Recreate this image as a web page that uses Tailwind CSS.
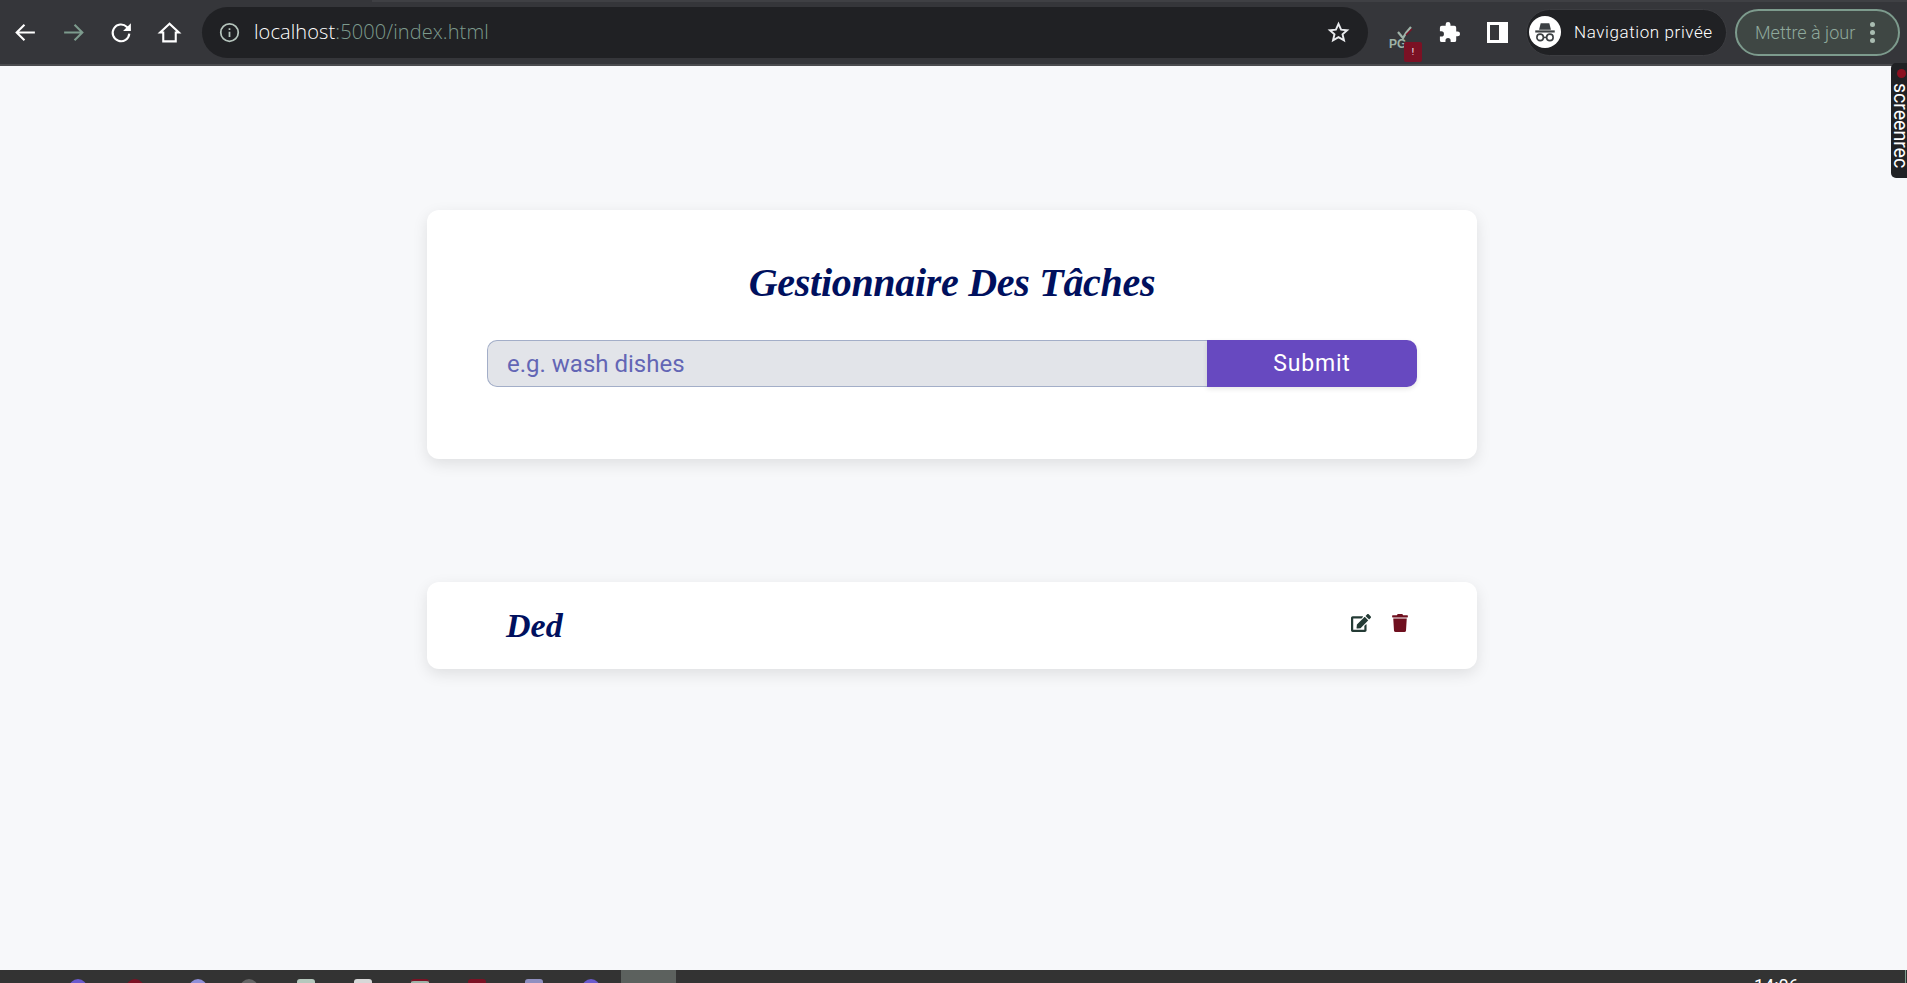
<!DOCTYPE html>
<html lang="fr">
<head>
  <meta charset="UTF-8" />
  <meta name="viewport" content="width=device-width, initial-scale=1.0"/>
  <title>Gestionnaire Des Tâches</title>
  <script src="https://cdn.jsdelivr.net/npm/@tailwindcss/browser@4"></script>
</head>
<body class="bg-[#f7f8fa] h-[983px] w-[1907px] overflow-hidden relative flex flex-col font-['Roboto',sans-serif]">

  <!-- Browser toolbar -->
  <header class="h-[66px] shrink-0 bg-[#35363a] border-b-2 border-[#4b4c4f] flex items-center relative">
    <div class="absolute top-0 left-[372px] right-0 h-[2px] bg-[#3f4044]"></div>

    <div class="flex items-center w-[202px] pl-[13px] gap-[23px]">
      <svg class="w-[25px] h-[25px]" viewBox="0 0 24 24" fill="none" stroke="#fff" stroke-width="2"><path d="M21 12H4M11 4.500 3.500 12l7.500 7.500"/></svg>
      <svg class="w-[25px] h-[25px]" viewBox="0 0 24 24" fill="none" stroke="#7d9b8d" stroke-width="2"><path d="M3 12h17M13 4.500l7.500 7.500-7.500 7.500"/></svg>
      <svg class="w-[25px] h-[25px]" viewBox="0 0 24 24" fill="none" stroke="#fff" stroke-width="2"><path d="M19.500 13a8 8 0 1 1-2.300-6.300L20 9.500"/><path d="M21 3v7.500h-7.500z" fill="#fff" stroke="none"/></svg>
      <svg class="w-[25px] h-[25px]" viewBox="0 0 24 24" fill="none" stroke="#fff" stroke-width="2"><path d="M12 3.500 3 12h3v8.500h12V12h3z"/></svg>
    </div>

    <div class="w-[1166px] h-[51px] rounded-full bg-[#202124] flex items-center pl-[17px] pr-[18px]">
      <svg class="w-[21px] h-[21px] shrink-0" viewBox="0 0 24 24" fill="none" stroke="#b5c4bc" stroke-width="2"><circle cx="12" cy="12" r="10"/><path d="M12 11v6M12 7v2"/></svg>
      <span class="ml-[14px] text-[20px] tracking-[0.1px] font-light text-white font-['Open_Sans',sans-serif]">localhost<span class="text-[#7d9b8d]">:5000/index.html</span></span>
      <svg class="w-[23px] h-[23px] ml-auto" viewBox="0 0 24 24" fill="none" stroke="#e8eaed" stroke-width="2"><path d="m12 3 2.700 6 6.300.6-4.800 4.200 1.500 6.400L12 16.800 6.300 20.200l1.500-6.400L3 9.600 9.300 9z"/></svg>
    </div>

    <div class="flex items-center">
      <!-- PG extension -->
      <div class="relative w-[33px] h-[36px] ml-[21px] mt-[24px]">
        <svg class="absolute left-[8px] top-0 w-[17px] h-[15px]" viewBox="0 0 17 15" fill="none"><path d="M1 6l5 6 3-5 5-6" stroke="#9fb3a8" stroke-width="2.200"/><path d="M9 9l6-6" stroke="#7b1124" stroke-width="1.500"/></svg>
        <span class="absolute left-0 top-[12px] text-[12px] leading-[13px] font-bold text-[#9fb3a8] font-['Liberation_Sans',sans-serif]">PG</span>
        <div class="absolute right-0 bottom-0 w-[18px] h-[20px] rounded-[2px] bg-[#7b1124] text-white text-[9px] leading-[20px] text-center">!</div>
      </div>

      <svg class="w-[23px] h-[23px] ml-[16px]" viewBox="0 0 24 24" fill="#fff"><path d="M20.500 11H19V7a2 2 0 0 0-2-2h-4V3.500a2.500 2.500 0 0 0-5 0V5H4a2 2 0 0 0-2 2v3.800h1.500a2.700 2.700 0 0 1 0 5.400H2V20a2 2 0 0 0 2 2h3.800v-1.500a2.700 2.700 0 0 1 5.400 0V22H17a2 2 0 0 0 2-2v-4h1.500a2.500 2.500 0 0 0 0-5z"/></svg>

      <div class="w-[21px] h-[21px] ml-[26px] border-[3px] border-white bg-[#35363a] flex justify-end">
        <div class="w-[6px] h-full bg-white"></div>
      </div>

      <!-- Incognito pill -->
      <div class="w-[201px] h-[47px] ml-[18px] rounded-full bg-[#202124] border border-[#3c3d41] flex items-center pl-[2px]">
        <div class="w-[32px] h-[32px] rounded-full bg-white flex items-center justify-center">
          <svg class="w-[26px] h-[26px]" viewBox="0 0 24 24" fill="none" stroke="#3c4043" stroke-width="1.500"><path d="M8 4h8l1.500 6h-11z" fill="#3c4043" stroke="none"/><path d="M3 11.500h18" stroke-width="2"/><circle cx="7.500" cy="17" r="3"/><circle cx="16.500" cy="17" r="3"/><path d="M10.500 17h3"/></svg>
        </div>
        <span class="ml-[13px] pt-[1px] text-[17px] tracking-[0.6px] font-light text-white whitespace-nowrap">Navigation privée</span>
      </div>

      <!-- Update pill -->
      <div class="w-[165px] h-[47px] ml-[8px] rounded-full bg-[#3f4744] border-2 border-[#7d9b8d] flex items-center pl-[18px]">
        <span class="text-[18px] font-light text-[#8fa99c] whitespace-nowrap">Mettre à jour</span>
        <div class="ml-[15px] flex flex-col gap-[3px]">
          <div class="w-[5px] h-[5px] rounded-full bg-[#a9bcb1]"></div>
          <div class="w-[5px] h-[5px] rounded-full bg-[#a9bcb1]"></div>
          <div class="w-[5px] h-[5px] rounded-full bg-[#a9bcb1]"></div>
        </div>
      </div>
    </div>
  </header>

  <!-- Page content -->
  <main class="flex-1 flex flex-col items-center pt-[144px] pr-[3px]">
    <section class="w-[1050px] h-[249px] bg-white rounded-[12px] shadow-[0_5px_15px_rgba(0,0,0,0.1)] px-[60px] pt-[48px]">
      <h1 class="h-[58px] text-center text-[40px] leading-[50px] font-bold italic text-[#00105e] tracking-[-0.3px] font-['Liberation_Serif',serif]">Gestionnaire Des Tâches</h1>
      <form class="flex mt-[24px]">
        <input type="text" placeholder="e.g. wash dishes" class="w-[720px] h-[47px] bg-[#e2e4e9] border border-[#a3aec8] border-r-0 rounded-l-[10px] pl-[19px] text-[24px] outline-none placeholder:text-[#6366b5]" />
        <button type="button" class="w-[210px] h-[47px] pt-[1px] bg-[#6749c0] text-white text-[23px] tracking-[0.8px] rounded-r-[10px] shadow-[0_2px_5px_rgba(0,0,0,0.1)]">Submit</button>
      </form>
    </section>

    <section class="w-[1050px] h-[87px] mt-[123px] bg-white rounded-[12px] shadow-[0_5px_15px_rgba(0,0,0,0.1)] flex items-center pl-[79px] pr-[69px]">
      <p class="text-[34px] font-bold italic text-[#00105e] font-['Liberation_Serif',serif]">Ded</p>
      <div class="ml-auto flex items-center gap-[21px] -mt-[5px]">
        <svg class="w-[20px] h-[18px]" viewBox="0 0 576 512" fill="#243b35"><path d="M402.6 83.2l90.2 90.2c3.8 3.8 3.8 10 0 13.8L274.4 405.6l-92.8 10.3c-12.4 1.4-22.9-9.1-21.5-21.5l10.3-92.8L388.8 83.2c3.8-3.8 10-3.8 13.8 0zm162-22.9l-48.8-48.8c-15.2-15.2-39.9-15.2-55.2 0l-35.4 35.4c-3.8 3.8-3.8 10 0 13.8l90.2 90.2c3.8 3.8 10 3.8 13.8 0l35.4-35.4c15.2-15.3 15.2-40 0-55.2zM384 346.2V448H64V128h229.8c3.2 0 6.2-1.3 8.5-3.5l40-40c7.6-7.6 2.2-20.5-8.5-20.5H48C21.5 64 0 85.5 0 112v352c0 26.5 21.5 48 48 48h352c26.5 0 48-21.5 48-48V306.2c0-10.7-12.9-16-20.5-8.5l-40 40c-2.200 2.300-3.500 5.300-3.500 8.500z"/></svg>
        <svg class="w-[16px] h-[18px]" viewBox="0 0 448 512" fill="#6f0f1f"><path d="M432 32H312l-9.4-18.7A24 24 0 0 0 281.1 0H166.8a23.72 23.72 0 0 0-21.4 13.3L136 32H16A16 16 0 0 0 0 48v32a16 16 0 0 0 16 16h416a16 16 0 0 0 16-16V48a16 16 0 0 0-16-16zM53.2 467a48 48 0 0 0 47.9 45h245.8a48 48 0 0 0 47.9-45L416 128H32z"/></svg>
      </div>
    </section>
  </main>

  <!-- Taskbar, cut off by the bottom of the window -->
  <footer class="h-[13px] shrink-0 bg-[#333333] overflow-hidden flex relative">
    <div class="flex items-start pl-[69px] pt-[9px] gap-[39px] w-[621px]">
      <div class="w-[18px] h-[18px] rounded-full bg-[#6a5acd]"></div>
      <div class="w-[18px] h-[18px] rounded-full bg-[#7b1124]"></div>
      <div class="w-[18px] h-[18px] rounded-full bg-[#8f8fd8] ml-[6px] -mr-[6px]"></div>
      <div class="w-[18px] h-[18px] rounded-full bg-[#666666]"></div>
      <div class="w-[18px] h-[18px] rounded-[3px] bg-[#b5c8bd]"></div>
      <div class="w-[18px] h-[18px] rounded-[3px] bg-[#d8d8d8]"></div>
      <div class="w-[18px] h-[18px] rounded-[3px] bg-[#9db3a8] border-t-2 border-[#7b1124]"></div>
      <div class="w-[18px] h-[18px] rounded-[3px] bg-[#7b1124]"></div>
      <div class="w-[18px] h-[18px] rounded-[3px] bg-[#8f8fc0]"></div>
      <div class="w-[18px] h-[18px] rounded-full bg-[#6a5acd]"></div>
    </div>
    <div class="w-[55px] bg-[#5c615e]"></div>
    <span class="absolute left-[1754px] top-[6px] text-[18px] leading-[20px] text-white">14:06</span>
    <div class="absolute right-[1px] top-0 bottom-0 w-[1px] bg-[#7d9b8d]"></div>
  </footer>

  <!-- Screen recorder tab, floats over the page -->
  <div class="absolute left-[1891px] top-[63px] w-[16px] h-[115px] bg-[#202124] rounded-l-[5px] overflow-hidden">
    <div class="absolute left-[6px] top-[6px] w-[9px] h-[9px] rounded-full bg-[#8b1020]"></div>
    <span class="absolute left-[2px] top-[20px] text-[19.500px] leading-[14px] text-white [writing-mode:vertical-rl]">screenrec</span>
  </div>

</body>
</html>
